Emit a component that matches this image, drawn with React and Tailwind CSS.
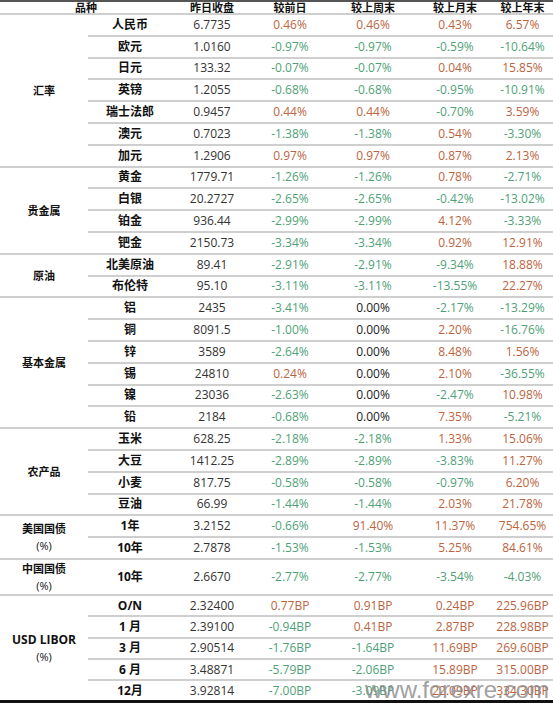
const groups = [
  {
    name: ['汇率'],
    h: 'h-[21.8px]',
    rows: [
      ['人民币', '6.7735', '0.46%', '0.46%', '0.43%', '6.57%'],
      ['欧元', '1.0160', '-0.97%', '-0.97%', '-0.59%', '-10.64%'],
      ['日元', '133.32', '-0.07%', '-0.07%', '0.04%', '15.85%'],
      ['英镑', '1.2055', '-0.68%', '-0.68%', '-0.95%', '-10.91%'],
      ['瑞士法郎', '0.9457', '0.44%', '0.44%', '-0.70%', '3.59%'],
      ['澳元', '0.7023', '-1.38%', '-1.38%', '0.54%', '-3.30%'],
      ['加元', '1.2906', '0.97%', '0.97%', '0.87%', '2.13%'],
    ],
  },
  {
    name: ['贵金属'],
    h: 'h-[21.8px]',
    rows: [
      ['黄金', '1779.71', '-1.26%', '-1.26%', '0.78%', '-2.71%'],
      ['白银', '20.2727', '-2.65%', '-2.65%', '-0.42%', '-13.02%'],
      ['铂金', '936.44', '-2.99%', '-2.99%', '4.12%', '-3.33%'],
      ['钯金', '2150.73', '-3.34%', '-3.34%', '0.92%', '12.91%'],
    ],
  },
  {
    name: ['原油'],
    h: 'h-[21.8px]',
    rows: [
      ['北美原油', '89.41', '-2.91%', '-2.91%', '-9.34%', '18.88%'],
      ['布伦特', '95.10', '-3.11%', '-3.11%', '-13.55%', '22.27%'],
    ],
  },
  {
    name: ['基本金属'],
    h: 'h-[21.8px]',
    rows: [
      ['铝', '2435', '-3.41%', '0.00%', '-2.17%', '-13.29%'],
      ['铜', '8091.5', '-1.00%', '0.00%', '2.20%', '-16.76%'],
      ['锌', '3589', '-2.64%', '0.00%', '8.48%', '1.56%'],
      ['锡', '24810', '0.24%', '0.00%', '2.10%', '-36.55%'],
      ['镍', '23036', '-2.63%', '0.00%', '-2.47%', '10.98%'],
      ['铅', '2184', '-0.68%', '0.00%', '7.35%', '-5.21%'],
    ],
  },
  {
    name: ['农产品'],
    h: 'h-[21.8px]',
    rows: [
      ['玉米', '628.25', '-2.18%', '-2.18%', '1.33%', '15.06%'],
      ['大豆', '1412.25', '-2.89%', '-2.89%', '-3.83%', '11.27%'],
      ['小麦', '817.75', '-0.58%', '-0.58%', '-0.97%', '6.20%'],
      ['豆油', '66.99', '-1.44%', '-1.44%', '2.03%', '21.78%'],
    ],
  },
  {
    name: ['美国国债', '(%)'],
    h: 'h-[21.8px]',
    rows: [
      ['1年', '3.2152', '-0.66%', '91.40%', '11.37%', '754.65%'],
      ['10年', '2.7878', '-1.53%', '-1.53%', '5.25%', '84.61%'],
    ],
  },
  {
    name: ['中国国债', '(%)'],
    h: 'h-[36px]',
    rows: [['10年', '2.6670', '-2.77%', '-2.77%', '-3.54%', '-4.03%']],
  },
  {
    name: ['USD LIBOR', '(%)'],
    h: 'h-[21.4px]',
    big: true,
    last: true,
    rows: [
      ['O/N', '2.32400', '0.77BP', '0.91BP', '0.24BP', '225.96BP'],
      ['1 月', '2.39100', '-0.94BP', '0.41BP', '2.87BP', '228.98BP'],
      ['3 月', '2.90514', '-1.76BP', '-1.64BP', '11.69BP', '269.60BP'],
      ['6 月', '3.48871', '-5.79BP', '-2.06BP', '15.89BP', '315.00BP'],
      ['12月', '3.92814', '-7.00BP', '-3.09BP', '22.09BP', '334.30BP'],
    ],
  },
];

const colW = ['w-[84px]', 'w-[80px]', 'w-[76px]', 'w-[90px]', 'w-[74px]', 'w-[61px]'];

function tone(v) {
  if (v.startsWith('-')) return 'text-[#4f9f78]';
  if (v === '0.00%') return 'text-[#222]';
  return 'text-[#bb6440]';
}

function Row({ r, h, edge }) {
  return (
    <div className={`flex items-center ${h} ${edge}`}>
      <div className={`${colW[0]} text-center text-[12px] font-bold text-[#111]`}>{r[0]}</div>
      <div className={`${colW[1]} text-center text-[12px] text-[#333]`}>{r[1]}</div>
      {r.slice(2).map((v, i) => (
        <div key={i} className={`${colW[i + 2]} text-center text-[12px] ${tone(v)}`}>
          {v}
        </div>
      ))}
    </div>
  );
}

export default function App() {
  return (
    <div
      className="relative w-[553px] h-[705px] bg-white overflow-hidden"
      style={{ fontFamily: '"Open Sans", "Noto Sans CJK SC", sans-serif' }}
    >
      <div className="flex items-center h-[15px] border-t-2 border-[#555] border-b-2 border-b-[#cfcfcf] text-[11px] font-bold text-[#111]">
        <div className="w-[172px] text-center leading-none">品种</div>
        <div className="w-[80px] text-center leading-none">昨日收盘</div>
        <div className="w-[76px] text-center leading-none">较前日</div>
        <div className="w-[90px] text-center leading-none">较上周末</div>
        <div className="w-[74px] text-center leading-none">较上月末</div>
        <div className="w-[61px] text-center leading-none">较上年末</div>
      </div>
      {groups.map((g, gi) => {
        const groupEdge = g.last ? 'border-b-[3px] border-[#111]' : 'border-b-2 border-[#cfcfcf]';
        return (
          <div key={gi} className="flex">
            <div className={`w-[88px] flex flex-col items-center justify-center leading-[17px] text-[#111] ${groupEdge}`}>
              {g.name.map((n, ni) => (
                <div
                  key={ni}
                  className={`${g.big && ni === 0 ? 'text-[12px]' : 'text-[11px]'} ${ni > 0 ? 'font-normal' : 'font-bold'}`}
                >
                  {n}
                </div>
              ))}
            </div>
            <div className="flex flex-col">
              {g.rows.map((r, ri) => (
                <Row
                  key={ri}
                  r={r}
                  h={g.h}
                  edge={ri === g.rows.length - 1 ? groupEdge : 'border-b-2 border-[#cfcfcf]'}
                />
              ))}
            </div>
          </div>
        );
      })}
      <div
        className="absolute left-[365px] top-[678px] text-[24px] leading-none text-[#8a8a8a] opacity-80 whitespace-nowrap pointer-events-none"
        style={{ fontFamily: '"Liberation Sans", Arial, sans-serif' }}
      >
        www.forexre.com
      </div>
    </div>
  );
}
